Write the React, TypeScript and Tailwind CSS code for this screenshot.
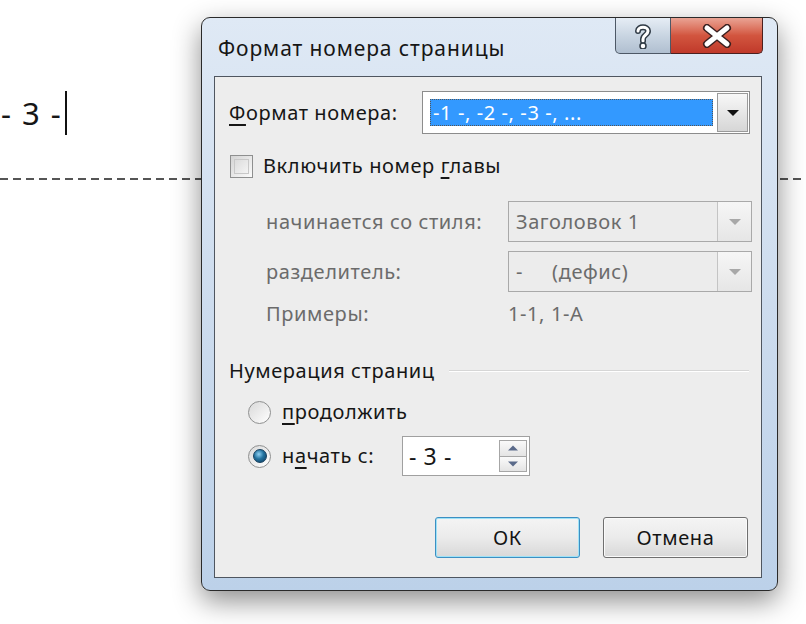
const Arrow = ({ disabled }: { disabled?: boolean }) => (
  <svg width="14" height="8" viewBox="0 0 14 8">
    <path d="M1 1 L13 1 L7 7 Z" fill={disabled ? "#a8a8a8" : "#111"} />
  </svg>
);

const Combo = ({ text, disabled }: { text: string; disabled?: boolean }) => (
  <div className="flex h-[41px] w-[244px] border border-[#a9a9a9] bg-[#ececec]">
    <div className="flex flex-1 items-center whitespace-pre pl-[7px] text-[#6b6b6b]">{text}</div>
    <div className="flex w-[34px] items-center justify-center border-l border-[#c4c4c4] bg-gradient-to-b from-[#f6f6f6] to-[#e6e6e6]">
      <Arrow disabled={disabled} />
    </div>
  </div>
);

const Radio = ({ checked }: { checked?: boolean }) => (
  <div className="flex h-[23px] w-[23px] items-center justify-center rounded-full border border-[#8f9090] bg-gradient-to-br from-[#d9d9d9] to-[#ffffff]">
    {checked && (
      <div className="h-[14px] w-[14px] rounded-full border border-[#163f5e] bg-[radial-gradient(circle_at_40%_35%,#8fd0f2_0,#22729f_45%,#0f3a5c_100%)]" />
    )}
  </div>
);

const Button = ({ label, primary }: { label: string; primary?: boolean }) => (
  <div
    className={`flex h-[41px] w-[145px] items-center justify-center rounded-[3px] border bg-gradient-to-b from-[#f4f4f4] via-[#ebebeb] to-[#d8d8d8] text-[#141414] ${
      primary
        ? "border-[#3c8fc2] shadow-[inset_0_0_0_1px_#9ee2f7]"
        : "border-[#6f6f6f] shadow-[inset_0_0_0_1px_#fafafa]"
    }`}
  >
    {label}
  </div>
);

export default function App() {
  return (
    <div className="relative h-[624px] w-[806px] overflow-hidden bg-white font-['Noto_Sans',sans-serif] text-[#161616]">
      {/* page behind the dialog */}
      <div className="flex h-[178px] flex-col">
        <div className="mt-[91px] flex items-center pl-[1px]">
          <span className="text-[31px] leading-[44px] tracking-[1.5px]">- 3 -</span>
          <span className="ml-[3px] h-[44px] w-[2px] bg-[#111]" />
        </div>
      </div>
      <div className="h-[2px] w-full bg-[repeating-linear-gradient(to_right,#555_0_8px,transparent_8px_13px)]" />

      {/* dialog window */}
      <div className="absolute left-[201px] top-[17px] flex h-[574px] w-[577px] flex-col rounded-[9px] border border-[#2a2a2a] bg-gradient-to-b from-[#dfe9f5] via-[#cddcee] to-[#bcd1e9] shadow-[0_10px_28px_rgba(0,0,0,0.45)]">
        <div className="flex h-[58px] items-start justify-between">
          <span className="ml-[16px] mt-[15px] text-[21px] leading-[30px] tracking-[0.9px] text-[#161616]">
            Формат номера страницы
          </span>
          <div className="mr-[14px] flex">
            <div className="flex h-[36px] w-[56px] items-center justify-center rounded-bl-[5px] border border-t-0 border-[#4d5866] bg-gradient-to-b from-[#e6edf5] via-[#c9d5e2] to-[#b0bfd0]">
              <svg width="20" height="26" viewBox="0 0 20 26">
                <path
                  d="M5 8 C5 3 15 3 15 8 C15 12 10 12 10 16 L10 18"
                  fill="none"
                  stroke="#2f3a45"
                  strokeWidth="6"
                  strokeLinecap="round"
                />
                <path
                  d="M5 8 C5 3 15 3 15 8 C15 12 10 12 10 16 L10 18"
                  fill="none"
                  stroke="#fff"
                  strokeWidth="3"
                  strokeLinecap="round"
                />
                <circle cx="10" cy="23" r="3" fill="#fff" stroke="#2f3a45" strokeWidth="1.5" />
              </svg>
            </div>
            <div className="flex h-[36px] w-[92px] items-center justify-center rounded-br-[5px] border border-l-0 border-t-0 border-[#4a2020] bg-gradient-to-b from-[#e9a394] via-[#d2553f] to-[#c0392a]">
              <svg width="32" height="24" viewBox="0 0 32 24">
                <path d="M6 4 L26 20 M26 4 L6 20" stroke="#3a2020" strokeWidth="8" strokeLinecap="round" />
                <path d="M6 4 L26 20 M26 4 L6 20" stroke="#fff" strokeWidth="5" strokeLinecap="round" />
              </svg>
            </div>
          </div>
        </div>

        <div className="ml-[12px] flex h-[502px] w-[548px] flex-col border border-[#4f5660] bg-[#ededed] text-[20px] tracking-[0.6px]">
          {/* Формат номера */}
          <div className="mt-[14px] flex h-[43px] items-center pl-[14px]">
            <span className="w-[193px]">
              <span className="underline underline-offset-4">Ф</span>ормат номера:
            </span>
            <div className="flex h-[43px] w-[328px] border border-[#8c8c8c] bg-white">
              <div className="m-[7px] mr-[4px] flex flex-1 items-center border border-dotted border-[#555] bg-[#3399ff] pl-[2px] text-white">
                -1 -, -2 -, -3 -, ...
              </div>
              <div className="my-[1px] mr-[1px] flex w-[31px] items-center justify-center border border-[#9a9a9a] bg-gradient-to-b from-[#f8f8f8] to-[#d6d6d6]">
                <Arrow />
              </div>
            </div>
          </div>

          {/* checkbox */}
          <div className="mt-[20px] flex h-[24px] items-center pl-[15px]">
            <div className="h-[23px] w-[23px] border border-[#8e8f8f] bg-gradient-to-br from-[#d4d4d4] to-[#fbfbfb] p-[3px]">
              <div className="h-full w-full border border-[#c8c8c8] bg-gradient-to-br from-[#dcdcdc] to-[#f4f4f4]" />
            </div>
            <span className="ml-[10px]">
              Включить номер <span className="underline underline-offset-4">г</span>лавы
            </span>
          </div>

          {/* disabled options */}
          <div className="mt-[23px] flex h-[41px] items-center pl-[51px] text-[#6b6b6b]">
            <span className="w-[242px]">начинается со стиля:</span>
            <Combo text="Заголовок 1" disabled />
          </div>
          <div className="mt-[9px] flex h-[41px] items-center pl-[51px] text-[#6b6b6b]">
            <span className="w-[242px]">разделитель:</span>
            <Combo text="-     (дефис)" disabled />
          </div>
          <div className="mt-[7px] flex h-[30px] items-center pl-[51px] text-[#6b6b6b]">
            <span className="w-[242px]">Примеры:</span>
            <span>1-1, 1-А</span>
          </div>

          {/* Нумерация страниц */}
          <div className="mt-[27px] flex h-[30px] items-center pl-[14px] pr-[12px]">
            <span>Нумерация страниц</span>
            <div className="ml-[14px] h-[2px] flex-1 border-t border-[#d6d6d6] bg-white" />
          </div>
          <div className="mt-[11px] flex h-[30px] items-center pl-[33px]">
            <Radio />
            <span className="ml-[11px]">
              <span className="underline underline-offset-4">п</span>родолжить
            </span>
          </div>
          <div className="mt-[9px] flex h-[40px] items-center pl-[33px]">
            <Radio checked />
            <span className="ml-[11px] w-[120px]">
              н<span className="underline underline-offset-4">а</span>чать с:
            </span>
            <div className="flex h-[40px] w-[128px] items-center border border-[#a0a0a0] bg-white pl-[6px] pr-[2px]">
              <span className="flex-1 text-[23px]">- 3 -</span>
              <div className="flex h-[32px] w-[28px] flex-col border border-[#a6a6a6]">
                <div className="flex flex-1 items-center justify-center border-b border-[#a6a6a6] bg-gradient-to-b from-[#fafafa] to-[#e4e4e4]">
                  <svg width="12" height="6" viewBox="0 0 12 6">
                    <path d="M1 5.5 L11 5.5 L6 0.5 Z" fill="#5a6a8a" />
                  </svg>
                </div>
                <div className="flex flex-1 items-center justify-center bg-gradient-to-b from-[#fafafa] to-[#e4e4e4]">
                  <svg width="12" height="6" viewBox="0 0 12 6">
                    <path d="M1 0.5 L11 0.5 L6 5.5 Z" fill="#5a6a8a" />
                  </svg>
                </div>
              </div>
            </div>
          </div>

          {/* buttons */}
          <div className="mt-[41px] flex gap-[23px] pl-[220px]">
            <Button label="ОК" primary />
            <Button label="Отмена" />
          </div>
        </div>
      </div>
    </div>
  );
}
